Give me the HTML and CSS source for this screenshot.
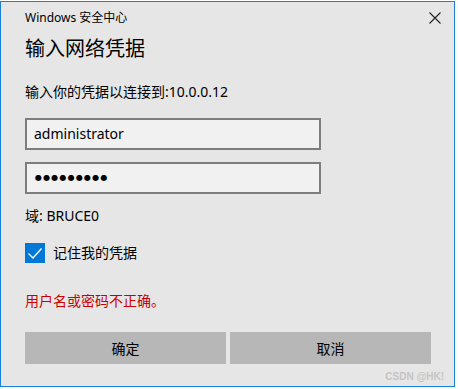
FILE: index.html
```html
<!DOCTYPE html>
<html lang="zh-CN">
    <head>
        <meta charset="utf-8">
        <title>Windows 安全中心</title>
        <link rel="stylesheet" href="styles.css">
    </head>
    <body>
        <div class="window">
            <div class="titlebar">
                <span class="title">Windows 安全中心</span>
                <svg class="close" width="12" height="12" viewBox="0 0 12 12">
                    <path d="M0.5 0.5 L11.5 11.5 M11.5 0.5 L0.5 11.5" stroke="#222" stroke-width="1.1" fill="none"/>
                </svg>
            </div>
            <h1 class="heading">输入网络凭据</h1>
            <p class="prompt">输入你的凭据以连接到:10.0.0.12</p>
            <div class="textbox">administrator</div>
            <div class="textbox password">●●●●●●●●●</div>
            <p class="domain">域: BRUCE0</p>
            <label class="remember">
                <span class="checkbox">
                    <svg width="20" height="20" viewBox="0 0 20 20">
                        <path d="M3.5 10.5 L8 15 L16.5 5.5" stroke="#fff" stroke-width="1.4" fill="none"/>
                    </svg>
                </span>
                <span>记住我的凭据</span>
            </label>
            <p class="error">用户名或密码不正确。</p>
            <div class="buttons">
                <button class="btn">确定</button>
                <button class="btn">取消</button>
            </div>
            <div class="watermark">CSDN @HK!</div>
        </div>
    </body>
</html>
```

FILE: styles.css
```css
body {
    margin: 0;
    background: #ffffff;
    font-family: "Noto Sans", "Noto Sans CJK SC", sans-serif;
    color: #000;
}
.window {
    margin-top: 1px;
    width: 455px;
    height: 386px;
    box-sizing: border-box;
    border: 1px solid #1a7fd6;
    background: #e6e6e6;
    padding-left: 24px;
    display: flex;
    flex-direction: column;
}
.titlebar {
    height: 31px;
    display: flex;
    align-items: center;
    justify-content: space-between;
    padding-right: 13px;
}
.title {
    font-size: 12px;
    line-height: 16px;
}
.close {
    display: block;
}
.heading {
    margin: 2px 0 0 0;
    font-size: 20px;
    font-weight: normal;
    line-height: 28px;
}
.prompt, .domain, .error {
    margin: 0;
    font-size: 14px;
    line-height: 20px;
}
.prompt {
    margin-top: 19px;
}
.textbox {
    width: 296px;
    height: 32px;
    box-sizing: border-box;
    margin-top: 16px;
    border: 2px solid #7d7d7d;
    background: #f1f1f1;
    padding-left: 7px;
    font-size: 14px;
    line-height: 28px;
}
.password {
    margin-top: 12px;
    padding-left: 8px;
    font-family: "DejaVu Sans", sans-serif;
    font-size: 8px;
    letter-spacing: 1.2px;
}
.domain {
    margin-top: 12px;
}
.remember {
    margin-top: 17px;
    display: flex;
    align-items: center;
    gap: 8px;
    font-size: 14px;
    line-height: 20px;
}
.checkbox {
    width: 20px;
    height: 20px;
    background: #0078d7;
}
.checkbox svg {
    display: block;
}
.error {
    margin-top: 28px;
    color: #cc0000;
}
.buttons {
    margin-top: 21px;
    display: flex;
    gap: 4px;
}
.btn {
    width: 201px;
    height: 32px;
    border: none;
    background: #b7b7b7;
    font-family: "Noto Sans", "Noto Sans CJK SC", sans-serif;
    font-size: 14px;
    color: #000;
    padding: 0;
}
.watermark {
    margin-top: 7px;
    margin-right: 10px;
    align-self: flex-end;
    font-family: "Liberation Sans", sans-serif;
    font-size: 10px;
    font-weight: bold;
    line-height: 12px;
    color: #c4c4c4;
}
```
